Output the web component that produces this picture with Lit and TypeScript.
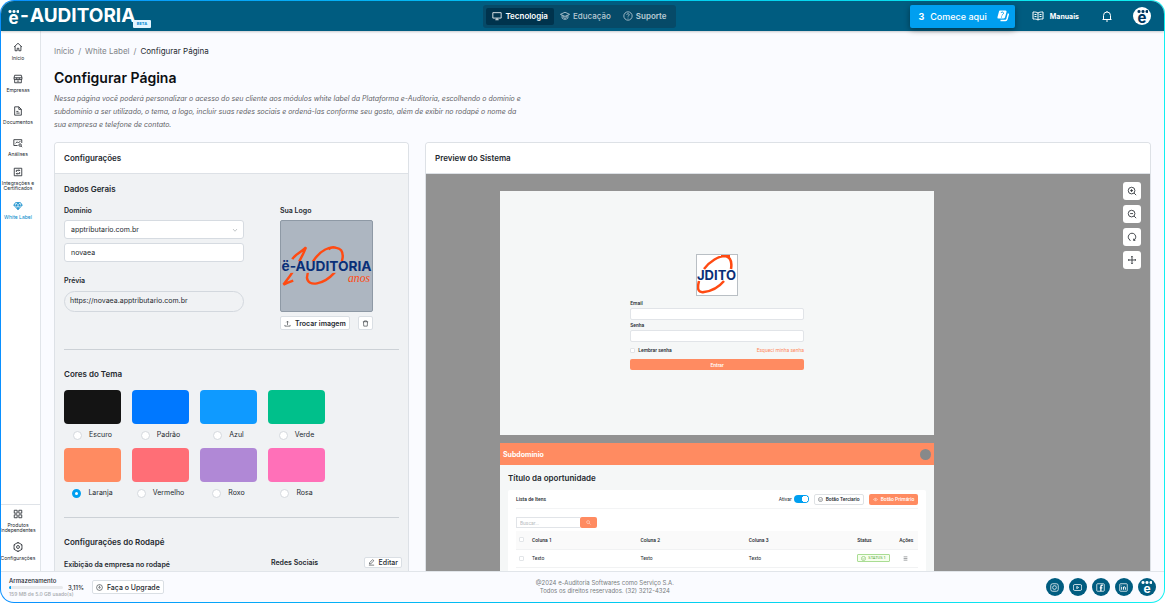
import { LitElement, html, svg, css, type SVGTemplateResult } from "lit";
import { customElement, state } from "lit/decorators.js";
import { classMap } from "lit/directives/class-map.js";
import { styleMap } from "lit/directives/style-map.js";

const shapes: Record<string, SVGTemplateResult> = {
  home: svg`<path d="M2.500 12 12 3l9.500 9M5 10v11h5v-6h4v6h5V10"/>`,
  store: svg`<path d="M4 3h16l1.500 6H2.500zM4 13v8h16v-8M2.500 9v4h19V9M9 9v4M15 9v4M9 17h6"/>`,
  doc: svg`<path d="M14 2H4v20h16V8zM14 2v6h6M8 13h5M8 17h8"/>`,
  analysis: svg`<path d="M21 12V4H2v14h9M6 13l4-4 3 3 5-5"/><circle cx="17" cy="17" r="3"/><path d="m19.500 19.500 2.500 2.500"/>`,
  integration: svg`<path d="M3 3h18v18H3z"/><path d="M8 12V8h8m-2-2 2 2-2 2M16 12v4H8m2-2-2 2 2 2"/>`,
  gem: svg`<path d="M6 4h12l4 6-10 11L2 10zM2 10h20M8 10l4 10 4-10-4-6z"/>`,
  apps: svg`<path d="M3 3h7v7H3zM14 3h7v7h-7zM3 14h7v7H3zM14 14h7v7h-7z"/>`,
  gear: svg`<path d="M12 1l9.500 5.500v11L12 23l-9.500-5.500v-11zM12 1v3M21 7l-2 1M21 17l-2-1M12 23v-3M3 17l2-1M3 7l2 1"/><circle cx="12" cy="12" r="3.500"/>`,
  monitor: svg`<path d="M2 4h20v13H2zM8 21h8M12 17v4"/>`,
  grad: svg`<path d="M12 3 1 8l11 5 11-5zM5 10v7c4 4 10 4 14 0v-7M9 12v4l3 2 3-2v-4"/>`,
  help: svg`<circle cx="12" cy="12" r="10"/><path d="M9 9.500c0-4 6-4 6-.5 0 2-3 2.500-3 4.500M12 16v2"/>`,
  book: svg`<path d="M12 6v14M12 6c-3-2-6-2-10-2v14c4 0 7 0 10 2 3-2 6-2 10-2V4c-4 0-7 0-10 2M5 9h4M5 13h4M15 9h4M15 13h4"/>`,
  bell: svg`<path d="M3 19h18M5 19v-8a7 7 0 0 1 14 0v8M10 22h4M12 2v2"/>`,
  zoomIn: svg`<circle cx="11" cy="11" r="8"/><path d="m17 17 5 5M7.500 11h7M11 7.500v7"/>`,
  zoomOut: svg`<circle cx="11" cy="11" r="8"/><path d="m17 17 5 5M7.500 11h7"/>`,
  reset: svg`<path d="M8 20a9 9 0 1 1 8 0M16 16v4h4M8 20l-2-1"/>`,
  move: svg`<path d="M12 3v18M3 12h18M10 5l2-2 2 2M10 19l2 2 2-2M5 10l-2 2 2 2M19 10l2 2-2 2"/>`,
  upload: svg`<path d="M3 17v4h18v-4M12 17V5M8 8l4-4 4 4"/>`,
  trash: svg`<path d="M3 6h18M8 6V3h8v3M5 6l1 15h12l1-15"/>`,
  edit: svg`<path d="M5 17l1-5L16 2l4 4L10 16zM3 21h18"/>`,
  chevron: svg`<path d="m4 8 8 9 8-9"/>`,
  search: svg`<circle cx="10" cy="10" r="7"/><path d="m15 15 7 7"/>`,
  play: svg`<circle cx="12" cy="12" r="10"/><circle cx="12" cy="12" r="2.500"/><path d="M12 6v3"/>`,
  check: svg`<circle cx="12" cy="12" r="10"/><path d="m7 12 4 4 6-7"/>`,
  eye: svg`<path d="M2 12c5-8 15-8 20 0-5 8-15 8-20 0z"/><circle cx="12" cy="12" r="3"/>`,
  menu: svg`<path d="M3 4h18M3 12h18M3 20h18"/>`,
  instagram: svg`<rect x="2" y="2" width="20" height="20" rx="5"/><circle cx="12" cy="12" r="5"/><path d="M18 6v.5"/>`,
  youtube: svg`<rect x="1" y="4" width="22" height="16" rx="4"/><path d="M10 9v6l5-3z"/>`,
  facebook: svg`<rect x="2" y="2" width="20" height="20" rx="2"/><path d="M18 6h-2q-3 0-3 3v13M10 13h7" stroke-width="3.500"/>`,
  linkedin: svg`<rect x="2" y="2" width="20" height="20" rx="2"/><path d="M7 10v8M7 6v1M12 18v-8M12 13c0-4 5-4 5 0v5" stroke-width="2.500"/>`,
};

const icon = (name: string, size = "") =>
  html`<svg class="icon ${size}" viewBox="0 0 24 24" aria-hidden="true">${shapes[name]}</svg>`;

/* Brand art: orange anniversary swirl crossed by the company name. */
const brandArt = () => html`
  <svg class="art" viewBox="0 0 92 92" role="img" aria-label="e-Auditoria 10 anos">
    <g class="swirl">
      <path d="M11 39C14 34 20 32 25 27C21 37 14 50 2 65Q6 63 12 61" />
      <path d="M55 27C39 26 27 46 26 58C27 68 43 65 54 53C64 44 66 29 56 27.500C52 26 49 28 48 29" />
    </g>
    <rect class="band" x="0" y="41" width="92" height="12" />
    <text class="name" x="0" y="51.500">ë-AUDITORIA</text>
    <text class="years" x="68" y="62">anos</text>
  </svg>`;

/* Square crop of the brand art, as shown above the login form. */
const brandThumb = () => html`
  <svg class="art" viewBox="0 0 40 40" role="img" aria-label="Logo">
    <g class="swirl">
      <path d="M7 14C13 6 22 1 28 1C34 2 35 8 34 14M24 1h9" />
      <path d="M2 26C0 34 1 38 7 37C15 36 22 32 27 26" />
    </g>
    <text class="name thumb" x="0" y="25">JDITO</text>
  </svg>`;

const sideTop = [
  ["home", "Início"], ["store", "Empresas"], ["doc", "Documentos"], ["analysis", "Análises"],
  ["integration", "Integrações e Certificados"], ["gem", "White Label"],
];
const sideBottom = [["apps", "Produtos Independentes"], ["gear", "Configurações"]];

const themes = [
  ["Escuro", "#141414"], ["Padrão", "#0078ff"], ["Azul", "#0f9aff"], ["Verde", "#00c08b"],
  ["Laranja", "#ff8b61"], ["Vermelho", "#ff6e76"], ["Roxo", "#b088d6"], ["Rosa", "#ff70b8"],
];

@customElement("app-root")
export class AppRoot extends LitElement {
  @state() private theme = "Laranja";

  static styles = css`
    :host { display: block; font-family: Inter, "Liberation Sans", sans-serif; color: #24292f; background: #fff; }
    * { box-sizing: border-box; }
    h1, h2, h3, p, ul, ol, fieldset { margin: 0; padding: 0; border: 0; list-style: none; }
    button, input, select { font: inherit; color: inherit; margin: 0; }
    button { cursor: pointer; }
    a { color: inherit; text-decoration: none; }
    .icon { width: 10px; height: 10px; flex: none; fill: none; stroke: currentColor; stroke-width: 2; display: block; }
    .icon.small { width: 9px; height: 9px; }
    .icon.tiny { width: 5px; height: 5px; }
    .icon.large { width: 12px; height: 12px; }

    .frame { height: 100vh; padding: 1px; border-radius: 14px; background: linear-gradient(to right, #0a90ff, #00c8f0 50%, #10f0f0); }
    .shell { height: 100%; border-radius: 13px; overflow: hidden; background: #fafbff; display: grid; grid-template-rows: 30px minmax(0, 1fr) 31px; }

    .top { background: #005c80; color: #fff; display: flex; align-items: center; justify-content: space-between; padding: 0 13px 0 7px; box-shadow: 0 1px 2px #0003; z-index: 1; }
    .side { flex: 1; display: flex; align-items: center; }
    .side.end { justify-content: flex-end; }
    .brand { position: relative; display: flex; align-items: center; gap: 1px; font-size: 19px; line-height: 26px; font-weight: 700; }
    .beta { position: absolute; left: 125px; top: 17px; width: 18px; background: #e4f5ff; color: #0086d1; font-size: 4px; line-height: 8px; text-align: center; border-radius: 1px; }
    .mark { display: flex; flex-direction: column; align-items: center; line-height: 10px; }
    .brand .mark { font-size: 17px; }
    .mark::before { content: ""; width: 11px; height: 3px; background: radial-gradient(circle, currentColor 1px, transparent 2px) 0 0 / 4px 3px; }
    .tabs { display: flex; background: #064a68; border-radius: 3px; padding: 3px; }
    .tab { display: flex; align-items: center; gap: 3px; height: 17px; padding: 0 6px; border: 0; border-radius: 2px; background: none; color: #b9cbd5; font-size: 8px; font-weight: 500; }
    .tab.on { background: #00334d; color: #fff; font-weight: 600; }
    .tab.strong { font-weight: 600; }
    .start { display: flex; align-items: center; gap: 6px; height: 23px; padding: 0 6px 0 8px; border: 0; border-radius: 2px; background: #009ff0; color: #fff; font-size: 9px; font-weight: 500; box-shadow: 0 2px 6px #0006; }
    .start .cards { width: 12px; height: 12px; margin-left: 4px; }
    .manual { display: flex; align-items: center; gap: 6px; margin-left: 17px; font-size: 7px; font-weight: 700; }
    .ghost { border: 0; background: none; padding: 0; margin: 0 20px 0 22px; color: #fff; }
    .avatar { width: 18px; height: 18px; border-radius: 50%; background: #fff; color: #00355f; border: 0; padding: 0; display: grid; place-items: center; font-size: 15px; font-weight: 700; }

    .body { display: grid; grid-template-columns: 40px minmax(0, 1fr); min-height: 0; }
    .rail { background: #fff; border-right: 1px solid #e1e5ea; display: flex; flex-direction: column; justify-content: space-between; padding: 11px 0 10px; font-size: 5px; line-height: 5px; }
    .rail ul { display: flex; flex-direction: column; align-items: stretch; gap: 13px; }
    .rail a { display: flex; flex-direction: column; align-items: center; gap: 4px; width: 34px; text-align: center; }
    .rail .bottom { border-top: 1px solid #dfe3e8; padding-top: 4px; gap: 9px; }
    .rail .tight { margin-top: -3px; }
    .rail .current { color: #0086c9; }

    .main { padding: 14px 13px 0 13px; min-width: 0; overflow: hidden; display: flex; flex-direction: column; }
    .crumbs { display: flex; gap: 4px; font-size: 8px; line-height: 12px; color: #808489; }
    .crumbs .here { color: #24292f; }
    h1 { margin-top: 12px; font-size: 14px; line-height: 18px; font-weight: 600; color: #0c0f12; }
    .intro { margin-top: 5px; max-width: 475px; font-size: 7px; line-height: 13px; font-style: italic; color: #5f6266; }
    .cards-row { margin-top: 11px; flex: 1; min-height: 0; display: grid; grid-template-columns: minmax(0, 355fr) minmax(0, 726fr); gap: 16px; }
    .card { border: 1px solid #dde1e6; border-bottom: 0; border-radius: 4px 4px 0 0; overflow: hidden; display: flex; flex-direction: column; min-height: 0; }
    .card > h2 { flex: none; padding: 0 9px; font-size: 8px; line-height: 30px; font-weight: 600; background: #fff; border-bottom: 1px solid #dde1e6; }
    .config { flex: 1; min-height: 0; overflow: hidden; background: #f0f2f4; padding: 9px 9px 0; }
    h3, legend { padding: 0; font-size: 8px; line-height: 12px; font-weight: 600; }
    .general { display: grid; grid-template-columns: 180px 93px; gap: 36px; margin-top: 11px; }
    .stack { display: flex; flex-direction: column; align-items: stretch; }
    .label { font-size: 7px; line-height: 10px; font-weight: 600; margin-bottom: 4px; }
    .field { width: 100%; height: 19px; padding: 0 6px; border: 1px solid #d6dbe1; border-radius: 3px; background: #fff; font-size: 7px; appearance: none; outline: none; }
    .picker { position: relative; margin-bottom: 4px; display: grid; }
    .picker .icon { position: absolute; right: 6px; top: 7px; width: 6px; height: 6px; color: #8b9096; pointer-events: none; }
    .gap-top { margin: 14px 0 5px; }
    .url { height: 21px; padding: 0 5px; border: 1px solid #d3d8de; border-radius: 11px; font-size: 7px; line-height: 18px; }
    .logo-box { height: 92px; border: 1px solid #8e99a5; border-radius: 2px; background: #adb6c1; overflow: hidden; }
    .art { display: block; width: 100%; height: 100%; }
    .swirl { fill: none; stroke: #ff4a12; stroke-width: 2.5; }
    .band { fill: #adb6c1; }
    .name { font-family: Inter, sans-serif; font-size: 14px; font-weight: 700; fill: #0a2f78; }
    .thumb { font-size: 13px; }
    .years { font: italic 12px "Liberation Serif", serif; fill: #ff4a12; }
    .actions { display: flex; justify-content: space-between; margin-top: 4px; }
    .btn { display: flex; align-items: center; justify-content: center; gap: 4px; height: 14px; padding: 0 3px; border: 1px solid #dadfe4; border-radius: 2px; background: #fff; font-size: 7px; font-weight: 600; white-space: nowrap; }
    .btn.plain { font-weight: 500; }
    .btn .icon { width: 7px; height: 7px; }
    .rule { border: 0; border-top: 1px solid #ccd1d6; margin: 19px 0 18px; }
    .swatches { display: grid; grid-template-columns: repeat(4, 57px); gap: 8px 11px; margin-top: 10px; }
    .swatch { display: grid; gap: 6px; font-size: 7px; line-height: 10px; }
    .chip { height: 34px; border-radius: 4px; }
    .pick { display: flex; align-items: center; justify-content: center; gap: 7px; }
    .radio { appearance: none; width: 9px; height: 9px; border: 1px solid #d5d9de; border-radius: 50%; background: #fff; }
    .radio:checked { border: 3px solid #009ff0; }
    .footer-config { display: grid; grid-template-columns: 207px 1fr auto; margin-top: 9px; }
    .footer-config .label { margin: 0; padding-top: 1px; }
    .footer-config .label.low { padding-top: 3px; }
    .footer-config .btn { height: 11px; margin-right: -3px; }

    .stage { position: relative; flex: 1; min-height: 0; overflow: hidden; background: #929292; padding: 17px 71px 0 74px; }
    .board { width: 75%; background: #f5f7f7; font-family: Roboto, sans-serif; font-size: 5px; line-height: 6px; }
    .login { display: flex; flex-direction: column; align-items: center; padding: 63px 0; height: 244px; }
    .mini-logo { width: 42px; height: 42px; border: 1px solid #b9bfc4; background: #fff; }
    .form { width: 40%; margin-top: 4px; display: grid; }
    .form label { font-weight: 500; }
    .form .entry { width: 100%; height: 12px; margin: 2px 0; border: 1px solid #e1e4e8; border-radius: 2px; background: #fff; padding: 0 3px; outline: none; }
    .remember { display: flex; justify-content: space-between; margin: 3px 0 6px; }
    .remember label { display: flex; align-items: center; gap: 3px; }
    .tick { appearance: none; width: 5px; height: 5px; border: 1px solid #e2e5e8; border-radius: 1px; background: #fff; display: block; }
    .forgot { color: #ff8b61; }
    .orange { border: 0; border-radius: 2px; background: #ff8b61; color: #fff; font-weight: 500; }
    .enter { height: 11px; }
    .dash { margin-top: 8px; }
    .bar { display: flex; align-items: center; justify-content: space-between; height: 22px; padding: 0 3px; background: #ff8b61; color: #fff; font: 700 7px Inter, sans-serif; }
    .dot { width: 11px; height: 11px; border-radius: 50%; background: #87898a; }
    .dash-body { padding: 7px 8px 0; }
    .dash-title { font-family: Inter, sans-serif; }
    .panel { margin-top: 6px; background: #fff; border-radius: 2px; padding: 0 8px 10px; }
    .panel-head { display: flex; align-items: center; gap: 5px; height: 19px; border-bottom: 1px solid #f3f4f5; font-weight: 500; }
    .panel-head .grow { flex: 1; }
    .switch-label { display: flex; align-items: center; gap: 2px; font-weight: 400; }
    .switch { appearance: none; width: 15px; height: 8px; border-radius: 4px; background: radial-gradient(circle at 11px 4px, #fff 3px, transparent 3px), #009ff0; }
    .mini { display: flex; align-items: center; justify-content: center; gap: 3px; height: 11px; padding: 0 4px; border-radius: 2px; font-size: 5px; white-space: nowrap; }
    .mini.line { padding: 0 3px; border: 1px solid #dfe2e5; background: #fff; }
    .search { display: flex; width: 81px; height: 11px; margin-top: 8px; }
    .search .entry { flex: 1; min-width: 0; border: 1px solid #e1e4e8; border-right: 0; padding: 0 3px; }
    .search .entry::placeholder { color: #b8bcc0; }
    .search .orange { width: 17px; padding: 0; display: grid; place-items: center; }
    table { width: 100%; margin-top: 3px; border-collapse: collapse; table-layout: fixed; }
    th, td { height: 18px; padding: 0 5px; text-align: left; font-weight: 400; border-bottom: 1px solid #f1f2f3; }
    th { background: #fafafa; font-weight: 500; }
    th:first-child, td:first-child { width: 11px; padding: 0 3px; }
    .c-status { width: 42px; }
    .c-act { width: 24px; }
    td .icon { margin-left: 4px; }
    .status { display: inline-flex; align-items: center; gap: 2px; height: 8px; padding: 0 3px; border: 1px solid #a9dd93; border-radius: 1px; background: #f6ffed; color: #4aa02c; font-size: 4px; white-space: nowrap; vertical-align: middle; }
    .status .icon { margin: 0; }
    .tools { position: absolute; top: 8px; right: 9px; display: grid; gap: 5px; }
    .tool { width: 18px; height: 18px; padding: 0; border: 0; border-radius: 3px; background: #fff; display: grid; place-items: center; }

    .foot { border-top: 1px solid #e1e5ea; padding: 0 8px 0 8px; display: flex; align-items: center; justify-content: space-between; }
    .foot-left { display: flex; align-items: center; gap: 8px; }
    .storage { display: grid; grid-template-columns: 54px auto; column-gap: 5px; align-items: center; font-size: 6px; line-height: 7px; font-weight: 500; }
    .storage .wide { grid-column: 1 / -1; }
    .storage .used { font-size: 5px; color: #a5a9ae; font-weight: 500; }
    .meter { height: 3px; border-radius: 2px; background: #e8eaed; overflow: hidden; }
    .meter-fill { height: 100%; background: #009ff0; }
    .legal { text-align: center; font-size: 6px; line-height: 8px; color: #777b80; }
    .social { display: flex; gap: 5px; }
    .social a { width: 18px; height: 18px; border-radius: 50%; background: #005c80; color: #fff; display: grid; place-items: center; font-size: 12px; font-weight: 700; }
  `;

  private sideItem([name, text]: string[]) {
    return html`<li class=${classMap({ tight: name === "integration" || name === "gem" })}>
      <a href="#" class=${classMap({ current: name === "gem" })}>${icon(name)}<span>${text}</span></a>
    </li>`;
  }

  private header() {
    return html`<header class="top">
      <div class="side">
        <a class="brand" href="#"><span class="mark">e</span><span>-</span><span>AUDITORIA</span><span class="beta">BETA</span></a>
      </div>
      <nav class="tabs">
        <button class="tab on">${icon("monitor")}Tecnologia</button>
        <button class="tab">${icon("grad")}Educação</button>
        <button class="tab strong">${icon("help")}Suporte</button>
      </nav>
      <div class="side end">
        <button class="start"><b>3</b><span>Comece aqui</span>
          <svg class="cards" viewBox="0 0 24 24" aria-hidden="true">
            <path fill="#fff" d="M6 1h11q3 0 2 3l-3 11q-1 2-3 2H3q-3 0-2-3L4 3q0-2 2-2z" />
            <path fill="none" stroke="#fff" stroke-width="3" d="M7 21h10q2 0 3-3l3-11" />
            <path fill="none" stroke="#009ff0" stroke-width="2" d="M8 6c1-3 6-2 5 1-1 2-3 2-3 4M9 13v2" />
          </svg>
        </button>
        <a class="manual" href="#">${icon("book", "large")}Manuais</a>
        <button class="ghost" aria-label="Notificações">${icon("bell", "large")}</button>
        <button class="avatar" aria-label="Conta"><span class="mark">e</span></button>
      </div>
    </header>`;
  }

  private config() {
    return html`<section class="card">
      <h2>Configurações</h2>
      <div class="config">
        <h3>Dados Gerais</h3>
        <div class="general">
          <div class="stack">
            <label class="label" for="domain">Domínio</label>
            <div class="picker">
              <select class="field" id="domain"><option>apptributario.com.br</option></select>
              ${icon("chevron")}
            </div>
            <input class="field" aria-label="Subdomínio" .value=${"novaea"} />
            <span class="label gap-top">Prévia</span>
            <div class="url">https://novaea.apptributario.com.br</div>
          </div>
          <div class="stack">
            <span class="label">Sua Logo</span>
            <div class="logo-box">${brandArt()}</div>
            <div class="actions">
              <button class="btn">${icon("upload")}Trocar imagem</button>
              <button class="btn plain" aria-label="Remover imagem">${icon("trash")}</button>
            </div>
          </div>
        </div>
        <hr class="rule" />
        <fieldset>
          <legend>Cores do Tema</legend>
          <div class="swatches">
            ${themes.map(([name, color]) => html`<label class="swatch">
              <span class="chip" style=${styleMap({ background: color })}></span>
              <span class="pick">
                <input class="radio" type="radio" name="theme" .checked=${this.theme === name}
                  @change=${() => (this.theme = name)} />${name}
              </span>
            </label>`)}
          </div>
        </fieldset>
        <hr class="rule" />
        <h3>Configurações do Rodapé</h3>
        <div class="footer-config">
          <span class="label low">Exibição da empresa no rodapé</span>
          <span class="label">Redes Sociais</span>
          <button class="btn plain">${icon("edit")}Editar</button>
        </div>
      </div>
    </section>`;
  }

  private preview() {
    return html`<section class="card">
      <h2>Preview do Sistema</h2>
      <div class="stage">
        <div class="board login">
          <div class="mini-logo">${brandThumb()}</div>
          <form class="form">
            <label for="mail">Email</label>
            <input class="entry" id="mail" type="email" />
            <label for="pass">Senha</label>
            <input class="entry" id="pass" type="password" />
            <div class="remember">
              <label><input class="tick" type="checkbox" />Lembrar senha</label>
              <a class="forgot" href="#">Esqueci minha senha</a>
            </div>
            <button class="orange enter" type="button">Entrar</button>
          </form>
        </div>
        <div class="board dash">
          <div class="bar"><span>Subdomínio</span><span class="dot"></span></div>
          <div class="dash-body">
            <h3 class="dash-title">Título da oportunidade</h3>
            <div class="panel">
              <div class="panel-head">
                <span class="grow">Lista de Itens</span>
                <label class="switch-label">Ativar <input class="switch" type="checkbox" role="switch" checked /></label>
                <button class="mini line">${icon("check", "tiny")}Botão Terciario</button>
                <button class="mini orange">${icon("eye", "tiny")}Botão Primário</button>
              </div>
              <div class="search">
                <input class="entry" placeholder="Buscar..." aria-label="Buscar" />
                <button class="orange" aria-label="Pesquisar">${icon("search", "tiny")}</button>
              </div>
              <table>
                <thead><tr>
                  <th><input class="tick" type="checkbox" aria-label="Selecionar todos" /></th>
                  <th>Coluna 1</th><th>Coluna 2</th><th>Coluna 3</th><th class="c-status">Status</th><th class="c-act">Ações</th>
                </tr></thead>
                <tbody><tr>
                  <td><input class="tick" type="checkbox" aria-label="Selecionar linha" /></td>
                  <td>Texto</td><td>Texto</td><td>Texto</td>
                  <td><span class="status">${icon("check", "tiny")}STATUS 1</span></td>
                  <td>${icon("menu", "tiny")}</td>
                </tr></tbody>
              </table>
            </div>
          </div>
        </div>
        <div class="tools">
          <button class="tool" aria-label="Aproximar">${icon("zoomIn")}</button>
          <button class="tool" aria-label="Afastar">${icon("zoomOut")}</button>
          <button class="tool" aria-label="Restaurar">${icon("reset")}</button>
          <button class="tool" aria-label="Mover">${icon("move")}</button>
        </div>
      </div>
    </section>`;
  }

  private footer() {
    return html`<footer class="foot">
      <div class="foot-left">
        <div class="storage">
          <span class="wide">Armazenamento</span>
          <div class="meter"><div class="meter-fill" style=${styleMap({ width: "3.11%" })}></div></div>
          <span>3,11%</span>
          <span class="wide used">159 MB de 5.0 GB usado(s)</span>
        </div>
        <button class="btn plain">${icon("play")}Faça o Upgrade</button>
      </div>
      <p class="legal">@2024 e-Auditoria Softwares como Serviço S.A.<br />Todos os direitos reservados. (32) 3212-4324</p>
      <nav class="social">
        ${["instagram", "youtube", "facebook", "linkedin"].map((n) => html`<a href="#" aria-label=${n}>${icon(n, "small")}</a>`)}
        <a href="#"><span class="mark">e</span></a>
      </nav>
    </footer>`;
  }

  render() {
    return html`<div class="frame"><div class="shell">
      ${this.header()}
      <div class="body">
        <nav class="rail">
          <ul>${sideTop.map((i) => this.sideItem(i))}</ul>
          <ul class="bottom">${sideBottom.map((i) => this.sideItem(i))}</ul>
        </nav>
        <main class="main">
          <nav class="crumbs"><a href="#">Início</a><span>/</span><a href="#">White Label</a><span>/</span><span class="here">Configurar Página</span></nav>
          <h1>Configurar Página</h1>
          <p class="intro">Nessa página você poderá personalizar o acesso do seu cliente aos módulos white label da Plataforma e-Auditoria, escolhendo o domínio e subdomínio a ser utilizado, o tema, a logo, incluir suas redes sociais e ordená-las conforme seu gosto, além de exibir no rodapé o nome da sua empresa e telefone de contato.</p>
          <div class="cards-row">${this.config()}${this.preview()}</div>
        </main>
      </div>
      ${this.footer()}
    </div></div>`;
  }
}
